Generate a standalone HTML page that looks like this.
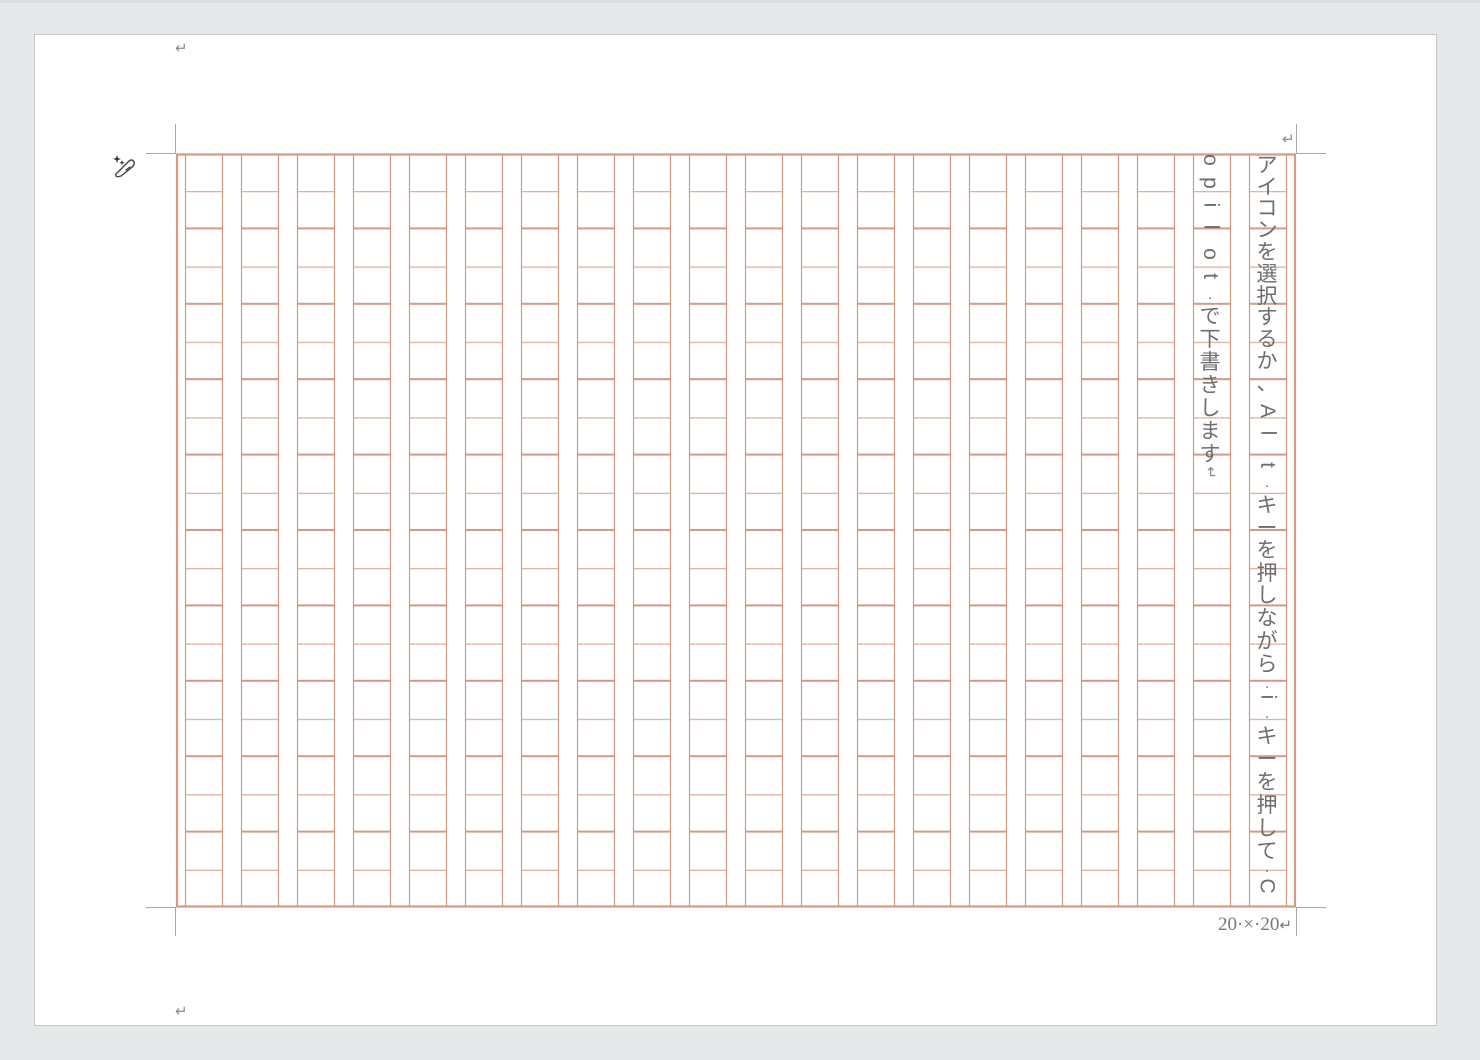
<!DOCTYPE html>
<html><head><meta charset="utf-8">
<style>
html,body{margin:0;padding:0;}
body{width:1480px;height:1060px;background:#e6e9e9;position:relative;overflow:hidden;font-family:"Liberation Sans","Noto Sans CJK JP",sans-serif;}
.topbar{position:absolute;left:0;top:0;width:1480px;height:3px;background:#dcdfdf;}
.page{position:absolute;left:34px;top:34px;width:1401px;height:990px;background:#fff;border:1px solid #c6c6c6;}
.ret{position:absolute;color:#8a8a8a;font-size:15px;line-height:15px;}
.ch{position:absolute;width:26px;height:22px;line-height:22px;text-align:center;font-size:21px;color:#6e6e6e;}
.ch.r span{display:inline-block;transform:rotate(90deg);}
.ch.d{font-size:15px;}
</style></head><body>
<div class="topbar"></div>
<div class="page"></div>
<svg style="position:absolute;left:0;top:0" width="1480" height="1060">
<defs>
<pattern id="g" patternUnits="userSpaceOnUse" x="176" y="154" width="56" height="75.4">
<line x1="9.5" y1="0" x2="9.5" y2="75.4" stroke="#d59a84" stroke-width="1.2"/>
<line x1="46.5" y1="0" x2="46.5" y2="75.4" stroke="#d59a84" stroke-width="1.2"/>
<line x1="9.5" y1="37.7" x2="46.5" y2="37.7" stroke="#d59a84" stroke-width="1"/>
<line x1="9.5" y1="74.4" x2="46.5" y2="74.4" stroke="#d59a84" stroke-width="2"/>
</pattern>
</defs>
<rect x="177" y="154" width="1119" height="752" fill="url(#g)"/>
<rect x="177" y="154.5" width="1118" height="752" fill="none" stroke="#d59a84" stroke-width="2.2"/>
<g stroke="#a8a8a8" stroke-width="1">
<line x1="175.5" y1="124" x2="175.5" y2="153"/>
<line x1="146" y1="153.5" x2="176" y2="153.5"/>
<line x1="1296.5" y1="124" x2="1296.5" y2="153"/>
<line x1="1296" y1="153.5" x2="1326" y2="153.5"/>
<line x1="146" y1="907.5" x2="176" y2="907.5"/>
<line x1="1296" y1="907.5" x2="1326" y2="907.5"/>
<line x1="175.5" y1="907" x2="175.5" y2="936"/>
<line x1="1296.5" y1="907" x2="1296.5" y2="936"/>
</g>
<g fill="none" stroke="#444" stroke-width="1.4" stroke-linecap="round">
<path d="M118 172 L128 162 Q132 158 134 162 Q135 165 131 168 L121 176 Q115 178 116 174 Z"/>
<path d="M126 170 L130 167"/>
</g>
<path d="M117 155 l1 3 3 1 -3 1 -1 3 -1 -3 -3 -1 3 -1z M122 160 l0.7 2 2 0.7 -2 0.7 -0.7 2 -0.7 -2 -2 -0.7 2 -0.7z" fill="#333"/>
</svg>
<div class="ret" style="left:175px;top:41px">↵</div>
<div class="ret" style="left:175px;top:1004px">↵</div>
<div class="ret" style="left:1282px;top:132px">↵</div>
<div style="position:absolute;left:1218px;top:914px;font-family:'Liberation Serif',serif;font-size:19px;color:#777;">20·×·20<span style="font-size:15px">↵</span></div>

<!-- column 1 -->
<div class="ch" style="left:1254px;top:155px">ア</div>
<div class="ch" style="left:1254px;top:177px">イ</div>
<div class="ch" style="left:1254px;top:198px">コ</div>
<div class="ch" style="left:1254px;top:220px">ン</div>
<div class="ch" style="left:1254px;top:242px">を</div>
<div class="ch" style="left:1254px;top:264px">選</div>
<div class="ch" style="left:1254px;top:286px">択</div>
<div class="ch" style="left:1254px;top:307px">す</div>
<div class="ch" style="left:1254px;top:329px">る</div>
<div class="ch" style="left:1254px;top:351px">か</div>
<div class="ch" style="left:1254px;top:373px">、</div>
<div class="ch r" style="left:1254px;top:400px"><span>A</span></div>
<div class="ch r" style="left:1254px;top:422px"><span>l</span></div>
<div class="ch r" style="left:1254px;top:454px"><span>t</span></div>
<div class="ch d" style="left:1254px;top:475px">·</div>
<div class="ch" style="left:1254px;top:495px">キ</div>
<div class="ch" style="left:1254px;top:518px">ー</div>
<div class="ch" style="left:1254px;top:540px">を</div>
<div class="ch" style="left:1254px;top:563px">押</div>
<div class="ch" style="left:1254px;top:585px">し</div>
<div class="ch" style="left:1254px;top:608px">な</div>
<div class="ch" style="left:1254px;top:631px">が</div>
<div class="ch" style="left:1254px;top:654px">ら</div>
<div class="ch d" style="left:1254px;top:676px">·</div>
<div class="ch r" style="left:1254px;top:686px"><span>i</span></div>
<div class="ch d" style="left:1254px;top:706px">·</div>
<div class="ch" style="left:1254px;top:726px">キ</div>
<div class="ch" style="left:1254px;top:749px">ー</div>
<div class="ch" style="left:1254px;top:772px">を</div>
<div class="ch" style="left:1254px;top:795px">押</div>
<div class="ch" style="left:1254px;top:818px">し</div>
<div class="ch" style="left:1254px;top:841px">て</div>
<div class="ch d" style="left:1254px;top:860px">·</div>
<div class="ch r" style="left:1254px;top:875px"><span>C</span></div>

<!-- column 2 -->
<div class="ch r" style="left:1197px;top:149px"><span>o</span></div>
<div class="ch r" style="left:1197px;top:172px"><span>p</span></div>
<div class="ch r" style="left:1197px;top:194px"><span>i</span></div>
<div class="ch r" style="left:1197px;top:216px"><span>l</span></div>
<div class="ch r" style="left:1197px;top:243px"><span>o</span></div>
<div class="ch r" style="left:1197px;top:265px"><span>t</span></div>
<div class="ch d" style="left:1197px;top:287px">·</div>
<div class="ch" style="left:1197px;top:306px">で</div>
<div class="ch" style="left:1197px;top:329px">下</div>
<div class="ch" style="left:1197px;top:352px">書</div>
<div class="ch" style="left:1197px;top:375px">き</div>
<div class="ch" style="left:1197px;top:398px">し</div>
<div class="ch" style="left:1197px;top:421px">ま</div>
<div class="ch" style="left:1197px;top:444px">す</div>
<div class="ret" style="left:1204px;top:465px;transform:rotate(90deg)">↵</div>
</body></html>
